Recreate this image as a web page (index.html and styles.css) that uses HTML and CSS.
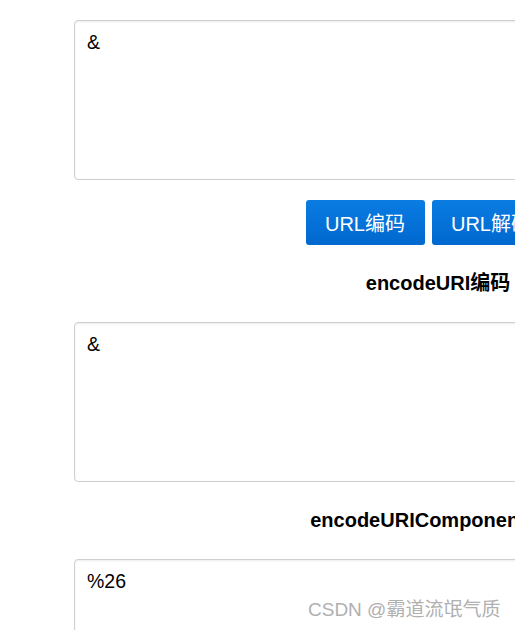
FILE: index.html
```html
<!DOCTYPE html>
<html lang="zh-CN">
<head>
  <meta charset="UTF-8">
  <meta name="viewport" content="width=device-width, initial-scale=1.0">
  <title>URL编码解码</title>
  <link rel="stylesheet" href="styles.css">
</head>
<body>
  <div class="page">
    <textarea class="box" id="source">&amp;</textarea>
    <div class="actions">
      <button class="btn">URL编码</button>
      <button class="btn">URL解码</button>
    </div>
    <h3 class="label">encodeURI编码</h3>
    <textarea class="box" id="uri">&amp;</textarea>
    <h3 class="label">encodeURIComponent编码</h3>
    <textarea class="box" id="component">%26</textarea>
  </div>
  <div class="watermark">CSDN @霸道流氓气质</div>
</body>
</html>
```

FILE: styles.css
```css
body {
  margin: 0;
  overflow: hidden;
  background-color: #fff;
  color: #000;
  font-family: "Liberation Sans", Arial, "Noto Sans CJK SC", sans-serif;
}
.page {
  width: 876px;
  padding-top: 20px;
  display: flex;
  flex-direction: column;
  align-items: center;
}
.box {
  box-sizing: border-box;
  width: 728px;
  height: 160px;
  margin: 0;
  padding: 10px 12px;
  border: 1px solid #cfcfcf;
  border-radius: 4px;
  box-shadow: inset 0 1px 2px rgba(0, 0, 0, 0.08);
  background-color: #fff;
  font-family: "Liberation Sans", Arial, "Noto Sans CJK SC", sans-serif;
  font-size: 19.5px;
  line-height: 23px;
  color: #000;
  resize: none;
}
.actions {
  display: flex;
  gap: 7px;
  margin-top: 20px;
  margin-right: 20px;
}
.btn {
  width: 119px;
  height: 45px;
  border: none;
  border-radius: 3px;
  background: linear-gradient(#0a7ce2, #0068cf);
  color: #fff;
  font-family: "Liberation Sans", Arial, "Noto Sans CJK SC", sans-serif;
  font-size: 20px;
  cursor: pointer;
}
.label {
  margin: 26px 0 27px;
  font-size: 20px;
  line-height: 24px;
  font-weight: bold;
}
.watermark {
  position: absolute;
  left: 308px;
  top: 598px;
  color: #b0b0b0;
  font-size: 19px;
  line-height: 24px;
  font-family: "Liberation Sans", Arial, "Noto Sans CJK SC", sans-serif;
}
```
